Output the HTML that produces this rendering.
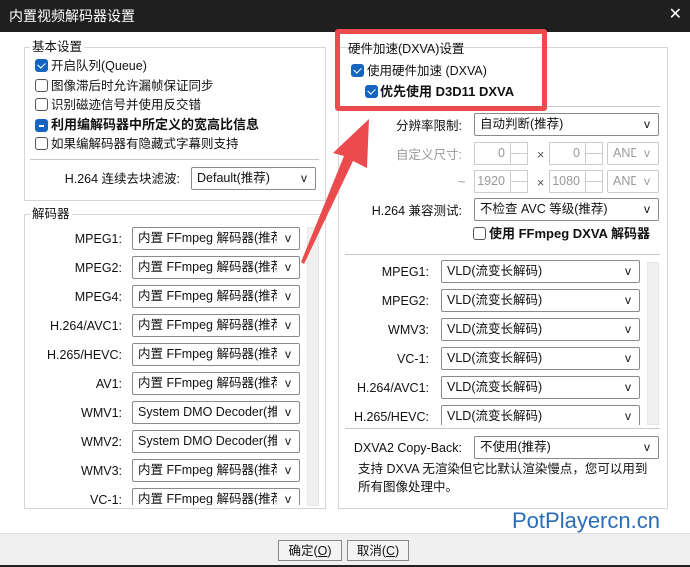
<!DOCTYPE html>
<html><head><meta charset="utf-8"><style>
*{box-sizing:border-box;margin:0;padding:0}
body{width:690px;height:567px;overflow:hidden;background:#fff;font-family:"Liberation Sans","Microsoft YaHei","Noto Sans CJK SC",sans-serif;font-size:12.5px;line-height:16px;color:#111;position:relative}
.a{position:absolute;white-space:nowrap}
.title{left:0;top:0;width:690px;height:32px;background:#1f1f1f;color:#fff;font-size:14px;padding:8px 0 0 9px}
.grp{position:absolute;border:1px solid #d6d6d6}
.gl{background:#fff;padding:0 2px}
.cb{position:absolute;width:13px;height:13px;border:1px solid #555;border-radius:3px;background:#fff}
.cb.on{background:#1565c0;border-color:#1565c0}
.cb.on:after{content:"";position:absolute;left:3px;top:1px;width:4px;height:6px;border:solid #fff;border-width:0 1.3px 1.3px 0;transform:rotate(45deg)}
.cb.ind{background:#1565c0;border-color:#1565c0}
.cb.ind:after{content:"";position:absolute;left:3px;top:5px;width:5px;height:1.5px;background:#fff}
.cmb{position:absolute;height:23px;border:1px solid #8a8a8a;border-radius:2px;background:#fff;padding:2px 0 0 5px;overflow:hidden;white-space:nowrap}
.cmb:after{content:"v";position:absolute;right:0;top:2px;width:22px;text-align:center;font-size:12px;background:#fff}
.sp{position:absolute;height:23px;border:1px solid #ccc;background:#fff;color:#999;text-align:right;padding:2px 22px 0 0}
.sp:after{content:"";position:absolute;right:0;top:0;width:16px;height:21px;border-left:1px solid #ccc;background:linear-gradient(#fff 0 10px,#ccc 10px 11px,#fff 11px)}
.dis{color:#999;border-color:#ccc}
.lbl{position:absolute;text-align:right;white-space:nowrap}
.sep{position:absolute;height:1px;background:#c8c8c8}
.sb{position:absolute;width:12px;background:#f0f0f0;border:1px solid #e6e6e6}
.btn{position:absolute;height:21px;border:1px solid #888;background:#f4f4f4;text-align:center;padding-top:2px}
</style></head><body>
<div class="a title">内置视频解码器设置</div>
<div class="a" style="right:8px;top:7px;color:#fff;font-size:16px">✕</div>

<div class="grp" style="left:24px;top:47px;width:302px;height:154px"></div>
<div class="a gl" style="left:30px;top:39px">基本设置</div>
<div class="cb on" style="left:35px;top:59px"></div><div class="a" style="left:51px;top:58px">开启队列(Queue)</div>
<div class="cb" style="left:35px;top:79px"></div><div class="a" style="left:51px;top:78px">图像滞后时允许漏帧保证同步</div>
<div class="cb" style="left:35px;top:98px"></div><div class="a" style="left:51px;top:97px">识别磁迹信号并使用反交错</div>
<div class="cb ind" style="left:35px;top:119px"></div><div class="a" style="left:51px;top:117px;font-weight:bold;font-size:13px">利用编解码器中所定义的宽高比信息</div>
<div class="cb" style="left:35px;top:137px"></div><div class="a" style="left:51px;top:136px">如果编解码器有隐藏式字幕则支持</div>
<div class="sep" style="left:30px;top:159px;width:289px"></div>
<div class="lbl" style="left:60px;width:120px;top:171px">H.264 连续去块滤波:</div>
<div class="cmb" style="left:191px;top:167px;width:125px">Default(推荐)</div>

<div class="grp" style="left:24px;top:214px;width:302px;height:295px"></div>
<div class="a gl" style="left:30px;top:206px">解码器</div>
<div style="position:absolute;left:25px;top:225px;width:300px;height:280px;overflow:hidden">
<div class="lbl" style="left:0;width:97px;top:6px">MPEG1:</div><div class="cmb" style="left:107px;top:2px;width:168px">内置 FFmpeg 解码器(推荐)</div>
<div class="lbl" style="left:0;width:97px;top:35px">MPEG2:</div><div class="cmb" style="left:107px;top:31px;width:168px">内置 FFmpeg 解码器(推荐)</div>
<div class="lbl" style="left:0;width:97px;top:64px">MPEG4:</div><div class="cmb" style="left:107px;top:60px;width:168px">内置 FFmpeg 解码器(推荐)</div>
<div class="lbl" style="left:0;width:97px;top:93px">H.264/AVC1:</div><div class="cmb" style="left:107px;top:89px;width:168px">内置 FFmpeg 解码器(推荐)</div>
<div class="lbl" style="left:0;width:97px;top:122px">H.265/HEVC:</div><div class="cmb" style="left:107px;top:118px;width:168px">内置 FFmpeg 解码器(推荐)</div>
<div class="lbl" style="left:0;width:97px;top:151px">AV1:</div><div class="cmb" style="left:107px;top:147px;width:168px">内置 FFmpeg 解码器(推荐)</div>
<div class="lbl" style="left:0;width:97px;top:180px">WMV1:</div><div class="cmb" style="left:107px;top:176px;width:168px">System DMO Decoder(推荐)</div>
<div class="lbl" style="left:0;width:97px;top:209px">WMV2:</div><div class="cmb" style="left:107px;top:205px;width:168px">System DMO Decoder(推荐)</div>
<div class="lbl" style="left:0;width:97px;top:238px">WMV3:</div><div class="cmb" style="left:107px;top:234px;width:168px">内置 FFmpeg 解码器(推荐)</div>
<div class="lbl" style="left:0;width:97px;top:267px">VC-1:</div><div class="cmb" style="left:107px;top:263px;width:168px">内置 FFmpeg 解码器(推荐)</div>
</div>
<div class="sb" style="left:307px;top:227px;height:279px"></div>

<div class="grp" style="left:338px;top:47px;width:330px;height:462px"></div>
<div class="a" style="left:348px;top:41px">硬件加速(DXVA)设置</div>
<div class="cb on" style="left:351px;top:64px"></div><div class="a" style="left:367px;top:63px">使用硬件加速 (DXVA)</div>
<div class="cb on" style="left:365px;top:85px"></div><div class="a" style="left:380px;top:84px;font-weight:bold;font-size:13px">优先使用 D3D11 DXVA</div>
<div class="sep" style="left:345px;top:106px;width:315px"></div>
<div class="lbl" style="left:340px;width:122px;top:118px">分辨率限制:</div>
<div class="cmb" style="left:474px;top:113px;width:185px">自动判断(推荐)</div>
<div class="lbl" style="left:340px;width:122px;top:147px;color:#999">自定义尺寸:</div>
<div class="sp" style="left:474px;top:142px;width:54px">0</div>
<div class="a" style="left:537px;top:147px;color:#555">×</div>
<div class="sp" style="left:549px;top:142px;width:54px">0</div>
<div class="cmb dis" style="left:607px;top:142px;width:52px">AND</div>
<div class="a" style="left:458px;top:174px;color:#999">~</div>
<div class="sp" style="left:474px;top:170px;width:54px">1920</div>
<div class="a" style="left:537px;top:175px;color:#555">×</div>
<div class="sp" style="left:549px;top:170px;width:54px">1080</div>
<div class="cmb dis" style="left:607px;top:170px;width:52px">AND</div>
<div class="lbl" style="left:340px;width:122px;top:203px">H.264 兼容测试:</div>
<div class="cmb" style="left:474px;top:198px;width:185px">不检查 AVC 等级(推荐)</div>
<div class="cb" style="left:473px;top:227px"></div><div class="a" style="left:489px;top:226px;font-weight:bold;font-size:13px">使用 FFmpeg DXVA 解码器</div>
<div class="sep" style="left:345px;top:254px;width:315px"></div>
<div class="lbl" style="left:340px;width:89px;top:264px">MPEG1:</div><div class="cmb" style="left:441px;top:260px;width:199px">VLD(流变长解码)</div>
<div class="lbl" style="left:340px;width:89px;top:293px">MPEG2:</div><div class="cmb" style="left:441px;top:289px;width:199px">VLD(流变长解码)</div>
<div class="lbl" style="left:340px;width:89px;top:322px">WMV3:</div><div class="cmb" style="left:441px;top:318px;width:199px">VLD(流变长解码)</div>
<div class="lbl" style="left:340px;width:89px;top:351px">VC-1:</div><div class="cmb" style="left:441px;top:347px;width:199px">VLD(流变长解码)</div>
<div class="lbl" style="left:340px;width:89px;top:380px">H.264/AVC1:</div><div class="cmb" style="left:441px;top:376px;width:199px">VLD(流变长解码)</div>
<div style="position:absolute;left:340px;top:400px;width:305px;height:25px;overflow:hidden">
<div class="lbl" style="left:0;width:89px;top:9px">H.265/HEVC:</div><div class="cmb" style="left:101px;top:5px;width:199px">VLD(流变长解码)</div></div>
<div class="sb" style="left:647px;top:262px;height:163px"></div>
<div class="sep" style="left:345px;top:428px;width:315px"></div>
<div class="lbl" style="left:340px;width:122px;top:440px">DXVA2 Copy-Back:</div>
<div class="cmb" style="left:474px;top:436px;width:185px">不使用(推荐)</div>
<div class="a" style="left:358px;top:461px">支持 DXVA 无渲染但它比默认渲染慢点，您可以用到</div>
<div class="a" style="left:358px;top:479px">所有图像处理中。</div>

<div class="a" style="left:512px;top:508px;font-size:22px;line-height:26px;color:#2a6cb5;font-family:'Liberation Sans',sans-serif">PotPlayercn.cn</div>

<div style="position:absolute;left:0;top:533px;width:690px;height:34px;background:#f0f0f0;border-top:1px solid #ddd;border-bottom:2px solid #222"></div>
<div class="btn" style="left:278px;top:540px;width:64px">确定(<u>O</u>)</div>
<div class="btn" style="left:347px;top:540px;width:62px">取消(<u>C</u>)</div>

<div style="position:absolute;left:335px;top:29px;width:212px;height:82px;border:5px solid #ec4b4e;border-radius:3px"></div>
<svg style="position:absolute;left:0;top:0" width="690" height="567"><polygon points="369,119 367,168 353,161 304,264 301,262 344,156 333,153" fill="#ec4b4e"/></svg>
</body></html>
